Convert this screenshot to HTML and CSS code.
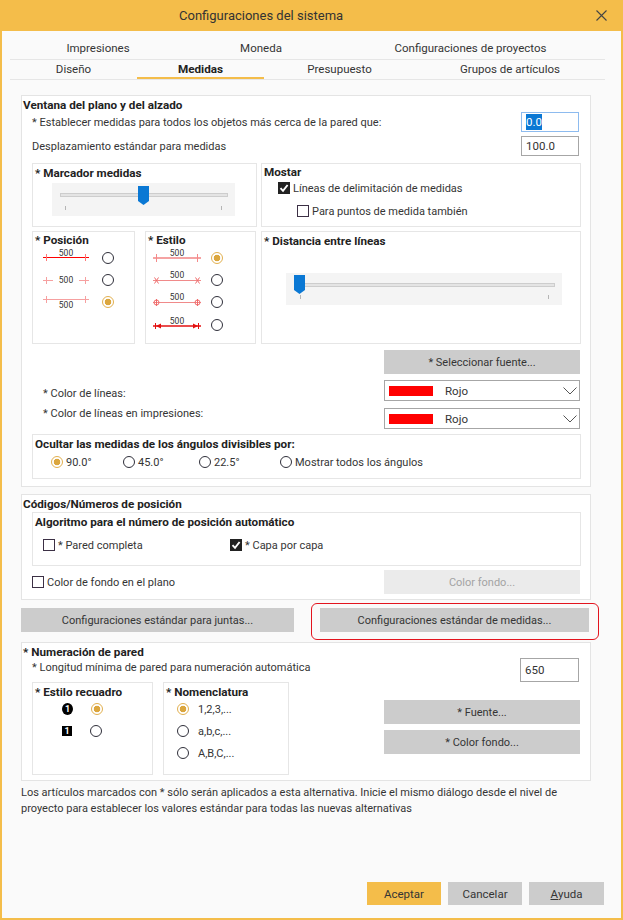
FILE: index.html
```html
<!DOCTYPE html>
<html lang="es">
<head>
  <meta charset="utf-8">
  <meta name="viewport" content="width=device-width, initial-scale=1">
  <title>Configuraciones del sistema</title>
  <link rel="stylesheet" href="styles.css">
</head>
<body>
<div class="window">
  <div class="titlebar">
    <span class="title">Configuraciones del sistema</span>
    <svg class="close" width="11" height="11" viewBox="0 0 11 11"><path d="M0.5 0.5L10.5 10.5M10.5 0.5L0.5 10.5" stroke="#444" stroke-width="1.1"/></svg>
  </div>

  <div class="tabs">
    <div class="tabrow row1">
      <div class="tab">Impresiones</div>
      <div class="tab">Moneda</div>
      <div class="tab">Configuraciones de proyectos</div>
    </div>
    <div class="tabrow row2">
      <div class="tab">Diseño</div>
      <div class="tab active">Medidas</div>
      <div class="tab">Presupuesto</div>
      <div class="tab">Grupos de artículos</div>
    </div>
  </div>

  <!-- Ventana del plano y del alzado -->
  <div class="panel plano">
    <div class="panel-title">Ventana del plano y del alzado</div>
    <div class="field-row">
      <span>* Establecer medidas para todos los objetos más cerca de la pared que:</span>
      <div class="num focus"><span class="sel">0.0</span></div>
    </div>
    <div class="field-row second">
      <span>Desplazamiento estándar para medidas</span>
      <div class="num">100.0</div>
    </div>

    <div class="subgrid">
      <div class="box marcador">
        <div class="box-title">* Marcador medidas</div>
        <svg class="slider" width="183" height="33" viewBox="0 0 183 33">
          <rect width="183" height="33" fill="#f4f4f4"/>
          <rect x="8.5" y="10.5" width="167" height="3" fill="#e4e4e4" stroke="#cdcdcd"/>
          <path d="M13.5 23v4M169.5 23v4" stroke="#b5b5b5"/>
          <path d="M86 3H97V18L91.5 22L86 18Z" fill="#0a78d4"/>
        </svg>
      </div>
      <div class="box mostar">
        <div class="box-title">Mostar</div>
        <div class="check-row first">
          <svg class="cb" width="12" height="12" viewBox="0 0 12 12"><rect width="12" height="12" fill="#222"/><path d="M2.5 6.2L5 8.8L9.6 3" stroke="#fff" stroke-width="1.9" fill="none"/></svg>
          <span>Líneas de delimitación de medidas</span>
        </div>
        <div class="check-row second">
          <span class="cbox"></span>
          <span>Para puntos de medida también</span>
        </div>
      </div>

      <div class="pair">
        <div class="box posicion">
          <div class="box-title">* Posición</div>
          <div class="icon-row">
            <svg width="50" height="22" viewBox="0 0 50 22">
              <path d="M2 10.5H48" stroke="#f00"/>
              <path d="M5.5 7v7M44.5 7v7" stroke="#f77"/>
              <text x="25" y="8.8" text-anchor="middle" class="dim">500</text>
            </svg>
            <span class="radio"></span>
          </div>
          <div class="icon-row">
            <svg width="50" height="22" viewBox="0 0 50 22">
              <path d="M2 11.5H12M38 11.5H48" stroke="#f6a0a0"/>
              <path d="M5.5 8v7M44.5 8v7" stroke="#f6a0a0"/>
              <text x="25" y="14" text-anchor="middle" class="dim">500</text>
            </svg>
            <span class="radio"></span>
          </div>
          <div class="icon-row">
            <svg width="50" height="22" viewBox="0 0 50 22">
              <path d="M2 8.5H48" stroke="#f6a0a0"/>
              <path d="M5.5 5v7M44.5 5v7" stroke="#f6a0a0"/>
              <text x="25" y="17" text-anchor="middle" class="dim">500</text>
            </svg>
            <span class="radio on"></span>
          </div>
        </div>

        <div class="box estilo">
          <div class="box-title">* Estilo</div>
          <div class="icon-row">
            <svg width="52" height="22" viewBox="0 0 52 22">
              <path d="M2 11H50" stroke="#f5a3a3" stroke-width="2"/>
              <path d="M5.5 7v8M46.5 7v8" stroke="#f58a8a"/>
              <text x="26" y="8.5" text-anchor="middle" class="dim">500</text>
            </svg>
            <span class="radio on"></span>
          </div>
          <div class="icon-row">
            <svg width="52" height="22" viewBox="0 0 52 22">
              <path d="M2 11.5H50" stroke="#f08a8a"/>
              <path d="M3.5 14.5L7.5 8.5M3.5 8.5L7.5 14.5M44.5 14.5L48.5 8.5M44.5 8.5L48.5 14.5" stroke="#f06a6a"/>
              <text x="26" y="9" text-anchor="middle" class="dim">500</text>
            </svg>
            <span class="radio"></span>
          </div>
          <div class="icon-row">
            <svg width="52" height="22" viewBox="0 0 52 22">
              <path d="M2 11.5H50" stroke="#f08a8a"/>
              <circle cx="5.5" cy="11.5" r="2.5" fill="none" stroke="#f06a6a"/>
              <circle cx="46.5" cy="11.5" r="2.5" fill="none" stroke="#f06a6a"/>
              <path d="M5.5 8v7M46.5 8v7" stroke="#f06a6a"/>
              <text x="26" y="9" text-anchor="middle" class="dim">500</text>
            </svg>
            <span class="radio"></span>
          </div>
          <div class="icon-row">
            <svg width="52" height="22" viewBox="0 0 52 22">
              <path d="M2 12H50" stroke="#e31010" stroke-width="1.4"/>
              <path d="M4.5 9v6M47.5 9v6" stroke="#e31010"/>
              <path d="M5 12L10 9.5V14.5Z M47 12L42 9.5V14.5Z" fill="#e31010"/>
              <text x="26" y="9.5" text-anchor="middle" class="dim">500</text>
            </svg>
            <span class="radio"></span>
          </div>
        </div>
      </div>

      <div class="box distancia">
        <div class="box-title">* Distancia entre líneas</div>
        <svg class="slider" width="276" height="32" viewBox="0 0 276 32">
          <rect width="276" height="32" fill="#f4f4f4"/>
          <rect x="9.5" y="10.5" width="259" height="3" fill="#e4e4e4" stroke="#cdcdcd"/>
          <path d="M14.5 22v4M262.5 22v4" stroke="#b5b5b5"/>
          <path d="M8 2H19V17L13.5 21L8 17Z" fill="#0a78d4"/>
        </svg>
      </div>
    </div>

    <button class="btn font-btn">* Seleccionar fuente...</button>

    <div class="color-row first">
      <span class="color-label">* Color de líneas:</span>
      <div class="select"><span class="swatch"></span><span>Rojo</span>
        <svg class="chev" width="14" height="8" viewBox="0 0 14 8"><path d="M0.5 0.5L7 7L13.5 0.5" stroke="#555" fill="none"/></svg></div>
    </div>
    <div class="color-row second">
      <span class="color-label">* Color de líneas en impresiones:</span>
      <div class="select"><span class="swatch"></span><span>Rojo</span>
        <svg class="chev" width="14" height="8" viewBox="0 0 14 8"><path d="M0.5 0.5L7 7L13.5 0.5" stroke="#555" fill="none"/></svg></div>
    </div>

    <div class="box ocultar">
      <div class="box-title">Ocultar las medidas de los ángulos divisibles por:</div>
      <div class="angle-row">
        <label class="opt a1"><span class="radio on"></span>90.0°</label>
        <label class="opt a2"><span class="radio"></span>45.0°</label>
        <label class="opt a3"><span class="radio"></span>22.5°</label>
        <label class="opt a4"><span class="radio"></span>Mostrar todos los ángulos</label>
      </div>
    </div>
  </div>

  <!-- Códigos/Números de posición -->
  <div class="panel codigos">
    <div class="panel-title">Códigos/Números de posición</div>
    <div class="box algoritmo">
      <div class="box-title">Algoritmo para el número de posición automático</div>
      <div class="alg-row">
        <label class="opt pared"><span class="cbox"></span>* Pared completa</label>
        <label class="opt"><svg class="cb" width="12" height="12" viewBox="0 0 12 12"><rect width="12" height="12" fill="#222"/><path d="M2.5 6.2L5 8.8L9.6 3" stroke="#fff" stroke-width="1.9" fill="none"/></svg>* Capa por capa</label>
      </div>
    </div>
    <div class="fondo-row">
      <label class="opt"><span class="cbox"></span>Color de fondo en el plano</label>
      <button class="btn disabled">Color fondo...</button>
    </div>
  </div>

  <div class="std-row">
    <button class="btn juntas">Configuraciones estándar para juntas...</button>
    <button class="btn medidas">Configuraciones estándar de medidas...</button>
  </div>

  <!-- Numeración de pared -->
  <div class="panel numeracion">
    <div class="panel-title">* Numeración de pared</div>
    <div class="field-row long">
      <span class="long-label">* Longitud mínima de pared para numeración automática</span>
      <div class="num tall">650</div>
    </div>
    <div class="num-body">
      <div class="box recuadro">
        <div class="box-title">* Estilo recuadro</div>
        <div class="rec-row"><span class="badge round">1</span><span class="radio on"></span></div>
        <div class="rec-row"><span class="badge square">1</span><span class="radio"></span></div>
      </div>
      <div class="box nomen">
        <div class="box-title">* Nomenclatura</div>
        <label class="nom-row"><span class="radio on"></span>1,2,3,...</label>
        <label class="nom-row"><span class="radio"></span>a,b,c,...</label>
        <label class="nom-row"><span class="radio"></span>A,B,C,...</label>
      </div>
      <div class="side-btns">
        <button class="btn">* Fuente...</button>
        <button class="btn">* Color fondo...</button>
      </div>
    </div>
  </div>

  <p class="note">Los artículos marcados con * sólo serán aplicados a esta alternativa. Inicie el mismo diálogo desde el nivel de<br>proyecto para establecer los valores estándar para todas las nuevas alternativas</p>

  <div class="actions">
    <button class="btn primary">Aceptar</button>
    <button class="btn">Cancelar</button>
    <button class="btn"><u>A</u>yuda</button>
  </div>
</div>
</body>
</html>
```

FILE: styles.css
```css
html, body {margin: 0; padding: 0;}
body {font-family: Roboto, "Liberation Sans", sans-serif; font-size: 11px; color: #353535;}

.window {width: 623px; height: 920px; box-sizing: border-box; border: 2px solid #f4bd4a; border-top: 0;
  background: #fafafa; display: flex; flex-direction: column;}

/* title bar */
.titlebar {height: 31px; flex: none; background: #f4bd4a; display: flex; align-items: center;}
.title {margin-left: 177px; font-size: 13px; color: #333;}
.close {margin-left: auto; margin-right: 14px;}

/* tabs */
.tabs {margin-left: 8px; width: 595px; flex: none;}
.tabrow {display: grid; border-bottom: 1px solid #e6e6e6; text-align: center; font-size: 11.5px;}
.row1 {grid-template-columns: 176px 150px 269px; padding-top: 7px; line-height: 21px;}
.row2 {grid-template-columns: 127px 127px 151px 1fr; line-height: 16px; padding-top: 1px;}
.row2 .tab {border-bottom: 2px solid transparent;}
.row2 .tab.active {border-bottom-color: #f4bd4a; font-weight: bold; color: #222; font-size: 11.7px;}

/* panels */
.panel {margin-left: 19px; width: 570px; box-sizing: border-box; border: 1px solid #e4e4e4; background: #fff; flex: none;}
.panel-title {font-weight: bold; font-size: 11.7px; color: #222; line-height: 15px; padding: 2px 0 0 1px; margin-bottom: -1px;}
.plano {margin-top: 15px; padding-bottom: 7px;}
.codigos {margin-top: 7px; padding-bottom: 5px;}
.numeracion {margin-top: 10px; padding-bottom: 5px;}

.field-row {display: flex; align-items: center; justify-content: space-between; height: 20px; padding: 0 11px 0 10px;}
.field-row.second {margin-top: 4px;}
.num {width: 58px; height: 20px; box-sizing: border-box; border: 1px solid #a6a6a6; background: #fff;
  padding-left: 4px; font-size: 11.5px; line-height: 18px; color: #333;}
.num.focus {border-color: #8dbbef;}
.num.tall {height: 24px; line-height: 22px; width: 59px;}
.sel {background: #0a78d4; color: #fff; padding: 1px 0;}

.box {border: 1px solid #e6e6e6; box-sizing: border-box; background: #fff;}
.box-title {font-weight: bold; font-size: 11.7px; color: #222; line-height: 16px; padding: 1px 0 0 2px; margin-bottom: -1px;}

.subgrid {display: grid; grid-template-columns: 225px 320px; grid-template-rows: 64px 113px; gap: 4px; margin: 7px 0 0 10px;}
.slider {display: block;}
.marcador .slider {margin: 3px 0 0 19px;}
.mostar .box-title {line-height: 14px;}
.check-row {display: flex; align-items: center; height: 18px; gap: 3px;}
.check-row.first {padding-left: 16px; margin-top: 1px;}
.check-row.second {padding-left: 35px; margin-top: 5px;}
.cb {display: block; flex: none;}
.cbox {width: 12px; height: 12px; box-sizing: border-box; border: 1px solid #3c3045; background: #fff; flex: none; display: inline-block;}

.pair {display: flex; gap: 10px;}
.posicion {width: 103px;}
.estilo {width: 111px;}
.posicion .box-title, .estilo .box-title {line-height: 15px;}
.icon-row {display: flex; align-items: center; height: 22px;}
.icon-row svg {display: block; flex: none;}
.posicion .icon-row {padding-left: 8px; gap: 11px;}
.estilo .icon-row {padding-left: 5px; gap: 8px;}
.estilo .icon-row:last-child {margin-top: 1px;}
.dim {font-family: Roboto, "Liberation Sans", sans-serif; font-size: 8.5px; fill: #333;}
.distancia .slider {margin: 25px 0 0 24px;}

.radio {width: 12px; height: 12px; box-sizing: border-box; border: 1px solid #2f2f3a; border-radius: 50%; background: #fff; flex: none; display: inline-block;}
.radio.on {border-color: #e2b04f; background: radial-gradient(circle, #dba63e 0 3px, #fff 3.6px);}

.btn {font: inherit; color: #353535; background: #cccccc; border: 0; padding: 0; height: 24px; display: flex; align-items: center; justify-content: center; box-sizing: border-box;}
.btn.disabled {background: #ebebeb; color: #a3a3a3;}
.font-btn {margin: 6px 0 0 362px; width: 196px;}

.color-row {display: flex; align-items: flex-start; height: 21px; padding: 0 10px 0 21px;}
.color-row.first {margin-top: 6px;}
.color-row.second {margin-top: 7px;}
.color-label {line-height: 14px;}
.color-row.first .color-label {margin-top: 7px;}
.color-row.second .color-label {margin-top: -1px;}
.select {margin-left: auto; width: 196px; height: 21px; box-sizing: border-box; border: 1px solid #a6a6a6; background: #fff;
  display: flex; align-items: center; padding-left: 4px; font-size: 11.5px;}
.swatch {width: 44px; height: 10px; background: #ff0000; margin-right: 12px;}
.chev {margin-left: auto; margin-right: 2px;}

.ocultar {margin: 5px 9px 0 10px; height: 45px;}
.angle-row {display: flex; align-items: center; height: 20px; margin-top: 1px;}
.opt {display: flex; align-items: center; gap: 3px;}
.a1 {margin-left: 18px; width: 72px;}
.a2 {width: 76px;}
.a3 {width: 81px;}

/* codigos */
.algoritmo {margin: 1px 9px 0 10px; height: 54px;}
.alg-row {display: flex; align-items: center; height: 20px; margin-top: 6px; padding-left: 10px;}
.pared {width: 187px;}
.fondo-row {display: flex; align-items: center; height: 24px; margin-top: 4px; padding: 0 10px 0 10px;}
.fondo-row .btn {margin-left: auto; width: 196px;}

.std-row {display: flex; margin: 8px 0 0 19px; flex: none;}
.std-row .btn {height: 24px;}
.juntas {width: 273px;}
.medidas {width: 269px; margin-left: 26px; position: relative;}
.medidas::after {content: ""; position: absolute; top: -5px; bottom: -8px; left: -9px; right: -10px;
  border: 1.5px solid #e3141e; border-radius: 6px;}

/* numeracion */
.field-row.long {height: 24px; margin-top: -2px; align-items: flex-start;}
.long-label {line-height: 14px; margin-top: 3px;}
.num-body {display: flex; padding: 0 10px 0 10px;}
.recuadro {width: 121px; height: 93px;}
.nomen {width: 126px; height: 93px; margin-left: 10px;}
.recuadro .box-title, .nomen .box-title {line-height: 14px; padding-top: 2px;}
.rec-row {display: flex; align-items: center; height: 22px; padding-left: 29px; gap: 18px;}
.badge {width: 10px; height: 10px; background: #000; color: #fff; font-size: 9px; font-weight: bold; line-height: 10px; text-align: center;}
.badge.round {border-radius: 50%; width: 11px; height: 12px; line-height: 12px;}
.nom-row {display: flex; align-items: center; height: 22px; padding-left: 13px; gap: 9px;}
.side-btns {margin: 18px 0 0 auto; width: 196px; display: flex; flex-direction: column; gap: 6px;}

.note {margin: 4px 0 0 19px; line-height: 16px; flex: none;}

.actions {margin: auto 17px 13px 0; display: flex; justify-content: flex-end; gap: 7px; flex: none;}
.actions .btn {width: 74px; height: 23px; font-size: 11.5px;}
.actions .btn:last-child {width: 75px;}
.btn.primary {background: #f4bd4a;}
```
